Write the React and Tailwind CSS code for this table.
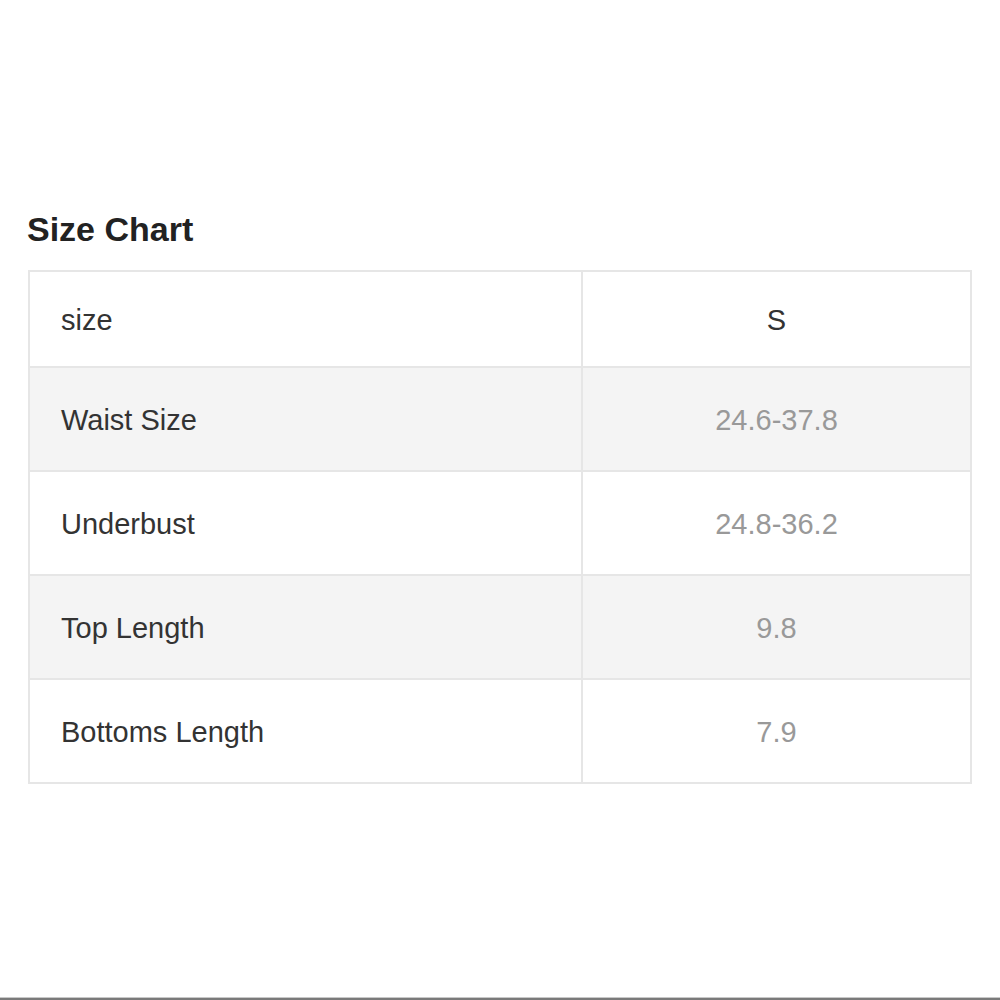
import React from "react";

const rows = [
  { label: "Waist Size", value: "24.6-37.8" },
  { label: "Underbust", value: "24.8-36.2" },
  { label: "Top Length", value: "9.8" },
  { label: "Bottoms Length", value: "7.9" },
];

export default function App() {
  return (
    <div
      className="relative w-[1000px] h-[1000px] bg-white flex flex-col"
      style={{ fontFamily: '"Liberation Sans", Arial, sans-serif' }}
    >
      <div className="pt-[212px] pl-[27px]">
        <h1 className="h-[34px] leading-[34px] text-[34px] font-bold text-[#222]">Size Chart</h1>
      </div>
      <div className="mt-[24px] ml-[28px] w-[944px] border-l-2 border-t-2 border-[#e6e6e6] grid grid-cols-[553px_389px] text-[29px]">
        <div className="h-[96px] pt-[4px] border-r-2 border-b-2 border-[#e6e6e6] flex items-center pl-[31px] text-[#333]">size</div>
        <div className="h-[96px] pt-[4px] border-r-2 border-b-2 border-[#e6e6e6] flex items-center justify-center text-[#333]">S</div>
        {rows.map((r, i) => (
          <React.Fragment key={r.label}>
            <div
              className={
                "h-[104px] pt-[4px] border-r-2 border-b-2 border-[#e6e6e6] flex items-center pl-[31px] text-[#333] " +
                (i % 2 === 0 ? "bg-[#f4f4f4]" : "bg-white")
              }
            >
              {r.label}
            </div>
            <div
              className={
                "h-[104px] pt-[4px] border-r-2 border-b-2 border-[#e6e6e6] flex items-center justify-center text-[#999] " +
                (i % 2 === 0 ? "bg-[#f4f4f4]" : "bg-white")
              }
            >
              {r.value}
            </div>
          </React.Fragment>
        ))}
      </div>
      <div className="mt-auto h-[1px] bg-[#c8c8c8]" />
      <div className="h-[2px] bg-[#7a7a7a]" />
    </div>
  );
}
